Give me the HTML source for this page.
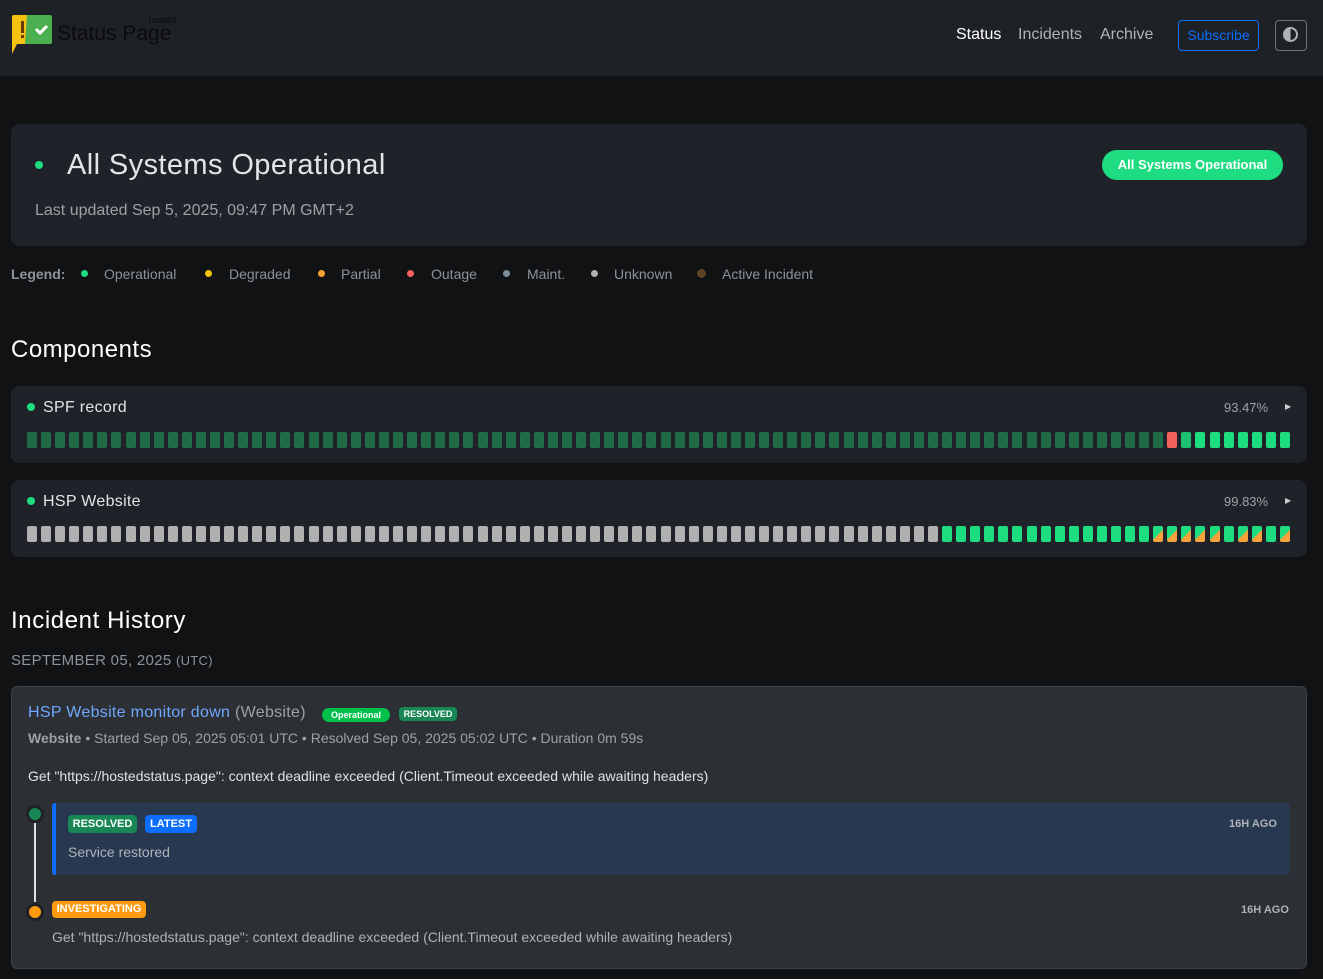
<!DOCTYPE html>
<html><head><meta charset="utf-8"><style>
*{box-sizing:border-box;margin:0;padding:0}
body{width:1323px;height:979px;background:#111214;font-family:"Liberation Sans",sans-serif;color:#dee2e6;position:relative;overflow:hidden}
.a{position:absolute;white-space:nowrap}
.hdr{position:absolute;left:0;top:0;width:1323px;height:76px;background:#1e2126}
.card{position:absolute;background:#1f2329;border-radius:8px}
.bars{position:absolute;left:27px;width:1264px;height:16px;display:flex;justify-content:space-between}
.bars i{display:block;width:10px;height:16px;border-radius:2px}
.d{background:#1f6b48}.r{background:#f0625a}.m{background:#1fbf72}.g{background:#1edd80}.x{background:#b0b0b0}
.s{background:linear-gradient(135deg,#1edd80 52%,#f7a23b 52%)}
.dot{position:absolute;border-radius:50%}
.badge{position:absolute;font-weight:bold;color:#fff;border-radius:4px;font-size:11px;text-align:center}
</style></head><body>
<div class="hdr"></div>
<svg class="a" style="left:11px;top:14px" width="42" height="40" viewBox="0 0 42 40">
<path d="M3 1H16L24 1 L14 30 L6 30 L1 40 L1 3 Q1 1 3 1Z" fill="#f5c211"/>
<path d="M16 1H39Q41 1 41 3V28Q41 30 39 30H14Z" fill="#4caf50"/>
<rect x="10" y="7" width="3" height="12" fill="#6b3a00"/><rect x="10" y="21" width="3" height="3" fill="#6b3a00"/>
<path d="M25 15l4 4 7-7" stroke="#fff" stroke-width="3" fill="none"/>
</svg>
<div class="a" style="left:57px;top:22px;font-size:21px;color:#0b0b0b">Status Page</div>
<div class="a" style="left:149px;top:15px;font-size:9px;color:#0b0b0b">hosted</div>
<div class="a" style="left:956px;top:26px;font-size:16px;color:#fff">Status</div>
<div class="a" style="left:1018px;top:26px;font-size:16px;color:#aeb3b8">Incidents</div>
<div class="a" style="left:1100px;top:26px;font-size:16px;color:#aeb3b8">Archive</div>
<div class="a" style="left:1178px;top:20px;width:81px;height:31px;border:1px solid #0d6efd;border-radius:4px;color:#0d6efd;font-size:14px;text-align:center;line-height:29px">Subscribe</div>
<div class="a" style="left:1275px;top:20px;width:32px;height:31px;border:1px solid #6c757d;border-radius:4px"></div>
<div class="dot" style="left:1283px;top:27px;width:15px;height:15px;border:2px solid #aeb3b8;background:linear-gradient(90deg,#aeb3b8 50%,transparent 50%)"></div>

<div class="card" style="left:11px;top:124px;width:1296px;height:122px"></div>
<div class="dot" style="left:35px;top:161px;width:8px;height:8px;background:#1edd80"></div>
<div class="a" style="left:67px;top:149px;font-size:29px;letter-spacing:0.4px;color:#e2e4e6">All Systems Operational</div>
<div class="a" style="left:35px;top:202px;font-size:16px;color:#9ca1a6">Last updated Sep 5, 2025, 09:47 PM GMT+2</div>
<div class="a" style="left:1102px;top:150px;width:181px;height:30px;border-radius:15px;background:#1edd80;color:#fff;font-weight:bold;font-size:13px;text-align:center;line-height:30px">All Systems Operational</div>

<div class="a" style="left:11px;top:266px;font-size:14px;color:#8d939a;font-weight:bold">Legend:</div>
<div class="dot" style="left:81px;top:270px;width:7px;height:7px;background:#1edd80"></div><div class="a" style="left:104px;top:266px;font-size:14px;color:#8d939a">Operational</div>
<div class="dot" style="left:205px;top:270px;width:7px;height:7px;background:#f5c211"></div><div class="a" style="left:229px;top:266px;font-size:14px;color:#8d939a">Degraded</div>
<div class="dot" style="left:318px;top:270px;width:7px;height:7px;background:#f7a23b"></div><div class="a" style="left:341px;top:266px;font-size:14px;color:#8d939a">Partial</div>
<div class="dot" style="left:407px;top:270px;width:7px;height:7px;background:#f0625a"></div><div class="a" style="left:431px;top:266px;font-size:14px;color:#8d939a">Outage</div>
<div class="dot" style="left:503px;top:270px;width:7px;height:7px;background:#7d8e99"></div><div class="a" style="left:527px;top:266px;font-size:14px;color:#8d939a">Maint.</div>
<div class="dot" style="left:591px;top:270px;width:7px;height:7px;background:#b0b0b0"></div><div class="a" style="left:614px;top:266px;font-size:14px;color:#8d939a">Unknown</div>
<div class="dot" style="left:697px;top:269px;width:9px;height:9px;background:#5b4423"></div><div class="a" style="left:722px;top:266px;font-size:14px;color:#8d939a">Active Incident</div>

<div class="a" style="left:11px;top:336px;font-size:24px;letter-spacing:0.5px;color:#fff">Components</div>

<div class="card" style="left:11px;top:386px;width:1296px;height:77px"></div>
<div class="dot" style="left:27px;top:403px;width:8px;height:8px;background:#1edd80"></div>
<div class="a" style="left:43px;top:399px;font-size:16px;letter-spacing:0.3px;color:#e2e4e6">SPF record</div>
<div class="a" style="left:1224px;top:400px;font-size:13px;color:#9ca1a6">93.47%</div>
<div class="a" style="left:1285px;top:402px;font-size:8px;color:#ccc">▶</div>
<div class="bars" style="top:432px">
<i class=d></i><i class=d></i><i class=d></i><i class=d></i><i class=d></i><i class=d></i><i class=d></i><i class=d></i><i class=d></i><i class=d></i>
<i class=d></i><i class=d></i><i class=d></i><i class=d></i><i class=d></i><i class=d></i><i class=d></i><i class=d></i><i class=d></i><i class=d></i>
<i class=d></i><i class=d></i><i class=d></i><i class=d></i><i class=d></i><i class=d></i><i class=d></i><i class=d></i><i class=d></i><i class=d></i>
<i class=d></i><i class=d></i><i class=d></i><i class=d></i><i class=d></i><i class=d></i><i class=d></i><i class=d></i><i class=d></i><i class=d></i>
<i class=d></i><i class=d></i><i class=d></i><i class=d></i><i class=d></i><i class=d></i><i class=d></i><i class=d></i><i class=d></i><i class=d></i>
<i class=d></i><i class=d></i><i class=d></i><i class=d></i><i class=d></i><i class=d></i><i class=d></i><i class=d></i><i class=d></i><i class=d></i>
<i class=d></i><i class=d></i><i class=d></i><i class=d></i><i class=d></i><i class=d></i><i class=d></i><i class=d></i><i class=d></i><i class=d></i>
<i class=d></i><i class=d></i><i class=d></i><i class=d></i><i class=d></i><i class=d></i><i class=d></i><i class=d></i><i class=d></i><i class=d></i>
<i class=d></i><i class=r></i><i class=m></i><i class=g></i><i class=g></i><i class=g></i><i class=g></i><i class=g></i><i class=g></i><i class=g></i>
</div>

<div class="card" style="left:11px;top:480px;width:1296px;height:77px"></div>
<div class="dot" style="left:27px;top:497px;width:8px;height:8px;background:#1edd80"></div>
<div class="a" style="left:43px;top:493px;font-size:16px;letter-spacing:0.3px;color:#e2e4e6">HSP Website</div>
<div class="a" style="left:1224px;top:494px;font-size:13px;color:#9ca1a6">99.83%</div>
<div class="a" style="left:1285px;top:496px;font-size:8px;color:#ccc">▶</div>
<div class="bars" style="top:526px">
<i class=x></i><i class=x></i><i class=x></i><i class=x></i><i class=x></i><i class=x></i><i class=x></i><i class=x></i><i class=x></i><i class=x></i>
<i class=x></i><i class=x></i><i class=x></i><i class=x></i><i class=x></i><i class=x></i><i class=x></i><i class=x></i><i class=x></i><i class=x></i>
<i class=x></i><i class=x></i><i class=x></i><i class=x></i><i class=x></i><i class=x></i><i class=x></i><i class=x></i><i class=x></i><i class=x></i>
<i class=x></i><i class=x></i><i class=x></i><i class=x></i><i class=x></i><i class=x></i><i class=x></i><i class=x></i><i class=x></i><i class=x></i>
<i class=x></i><i class=x></i><i class=x></i><i class=x></i><i class=x></i><i class=x></i><i class=x></i><i class=x></i><i class=x></i><i class=x></i>
<i class=x></i><i class=x></i><i class=x></i><i class=x></i><i class=x></i><i class=x></i><i class=x></i><i class=x></i><i class=x></i><i class=x></i>
<i class=x></i><i class=x></i><i class=x></i><i class=x></i><i class=x></i><i class=g></i><i class=g></i><i class=g></i><i class=g></i><i class=g></i>
<i class=g></i><i class=g></i><i class=g></i><i class=g></i><i class=g></i><i class=g></i><i class=g></i><i class=g></i><i class=g></i><i class=g></i>
<i class=s></i><i class=s></i><i class=s></i><i class=s></i><i class=s></i><i class=g></i><i class=s></i><i class=s></i><i class=g></i><i class=s></i>
</div>

<div class="a" style="left:11px;top:607px;font-size:24px;letter-spacing:0.6px;color:#fff">Incident History</div>
<div class="a" style="left:11px;top:652px;font-size:15px;letter-spacing:0.3px;color:#8d939a">SEPTEMBER 05, 2025 <span style="font-size:13px">(UTC)</span></div>

<div class="a" style="left:11px;top:686px;width:1296px;height:283px;background:#2c3034;border:1px solid #3d4247;border-radius:6px"></div>
<div class="a" style="left:28px;top:704px;font-size:16px;letter-spacing:0.3px;color:#6ea8fe">HSP Website monitor down <span style="color:#9ca1a6">(Website)</span></div>
<div class="badge" style="left:322px;top:708px;width:68px;height:14px;line-height:14px;font-size:9px;border-radius:7px;background:#00c04b">Operational</div>
<div class="badge" style="left:399px;top:707px;width:58px;height:14px;line-height:14px;font-size:9px;background:#198754">RESOLVED</div>
<div class="a" style="left:28px;top:730px;font-size:14px;color:#9ca1a6"><b>Website</b> • Started Sep 05, 2025 05:01 UTC • Resolved Sep 05, 2025 05:02 UTC • Duration 0m 59s</div>
<div class="a" style="left:28px;top:768px;font-size:14px;color:#dee2e6">Get "https://hostedstatus.page": context deadline exceeded (Client.Timeout exceeded while awaiting headers)</div>

<div class="a" style="left:34px;top:818px;width:2px;height:84px;background:#dee2e6"></div>
<div class="dot" style="left:26px;top:805px;width:18px;height:18px;background:#198754;border:3px solid #1e2126"></div>
<div class="dot" style="left:26px;top:903px;width:18px;height:18px;background:#fd9a0e;border:3px solid #1e2126"></div>

<div class="a" style="left:52px;top:803px;width:1238px;height:72px;background:#283850;border-left:4px solid #0d6efd;border-radius:3px"></div>
<div class="badge" style="left:68px;top:815px;width:69px;height:18px;line-height:18px;background:#198754">RESOLVED</div>
<div class="badge" style="left:145px;top:815px;width:52px;height:18px;line-height:18px;background:#0d6efd">LATEST</div>
<div class="a" style="left:68px;top:844px;font-size:14px;color:#aeb3b8">Service restored</div>
<div class="a" style="left:1229px;top:818px;font-size:11px;font-weight:bold;color:#aeb3b8">16H AGO</div>

<div class="badge" style="left:52px;top:901px;width:94px;height:17px;line-height:17px;background:#fd9a0e">INVESTIGATING</div>
<div class="a" style="left:1241px;top:904px;font-size:11px;font-weight:bold;color:#aeb3b8">16H AGO</div>
<div class="a" style="left:52px;top:929px;font-size:14px;color:#aeb3b8">Get "https://hostedstatus.page": context deadline exceeded (Client.Timeout exceeded while awaiting headers)</div>
</body></html>
